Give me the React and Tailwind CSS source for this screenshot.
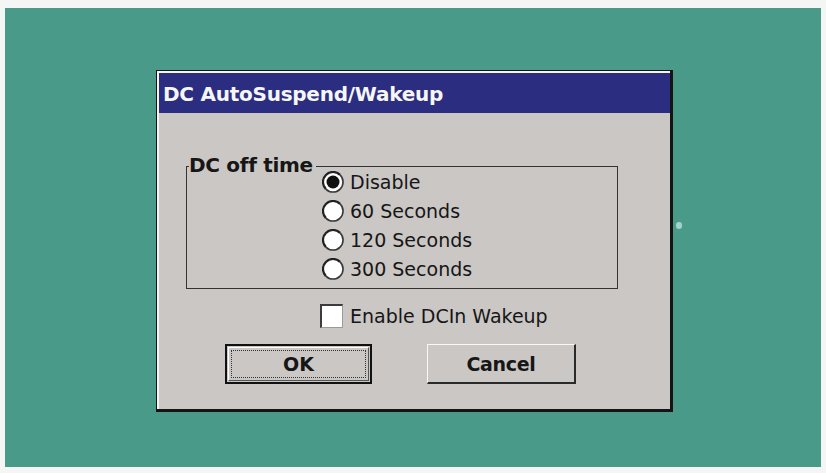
const font = { fontFamily: '"DejaVu Sans", "Liberation Sans", sans-serif' };

function Radio({ checked }) {
  return (
    <svg width="22" height="22" viewBox="0 0 22 22" className="shrink-0">
      <circle cx="11" cy="11" r="10" fill="#ffffff" />
      <path d="M3.9 18.1 A10 10 0 0 1 18.1 3.9" fill="none" stroke="#222222" strokeWidth="2.2" />
      <path d="M18.1 3.9 A10 10 0 0 1 3.9 18.1" fill="none" stroke="#3a3a3a" strokeWidth="1.6" />
      {checked && <circle cx="11" cy="11" r="6.5" fill="#111111" />}
    </svg>
  );
}

export default function App() {
  const options = ["Disable", "60 Seconds", "120 Seconds", "300 Seconds"];
  return (
    <div className="w-[826px] h-[473px] bg-[#f3f6f5] pt-[8px] pl-[5px] overflow-hidden" style={font}>
      <div className="relative w-[816px] h-[459px] bg-[#4a9a8a] pt-[62px] pl-[151px]">
        <div className="w-[517px] h-[342px] border-t border-l border-r-[3px] border-b-[3px] border-[#141414]">
          <div className="h-full border-t-2 border-l-2 border-[#f4f4f4] bg-[#cac7c4] flex flex-col">
            <div className="h-[40px] shrink-0 bg-[#2b2d80] text-[#f6f6f6] font-bold text-[20px] leading-[22px] pl-[4px] pt-[2px] flex items-center tracking-[-0.25px]">
              DC AutoSuspend/Wakeup
            </div>
            <div className="flex-1 flex flex-col text-[#161616]">
              <div className="relative mt-[53px] ml-[27px] w-[432px] h-[123px] border border-[#333333]">
                <span className="absolute left-[2px] top-[-13px] bg-[#cac7c4] pr-[3px] font-bold text-[20px] leading-[22px] tracking-[-0.3px]">
                  DC off time
                </span>
                <div className="flex flex-col pl-[135px]">
                  {options.map((o, i) => (
                    <div key={o} className="h-[29px] flex items-center gap-[6px] text-[19px] leading-[22px]">
                      <Radio checked={i === 0} />
                      <span>{o}</span>
                    </div>
                  ))}
                </div>
              </div>
              <div className="mt-[15px] ml-[161px] h-[24px] flex items-center gap-[7px] text-[19px] leading-[22px]">
                <div className="w-[23px] h-[24px] bg-white border-t-2 border-l-2 border-[#3c3c3c] border-r border-b border-r-[#9a9a9a] border-b-[#9a9a9a]" />
                <span>Enable DCIn Wakeup</span>
              </div>
              <div className="mt-[16px] ml-[66px] flex gap-[55px]">
                <div className="w-[147px] h-[40px] border-2 border-[#111111] p-[1px]">
                  <div className="h-full border-t border-l border-white border-r border-b border-r-[#555555] border-b-[#555555] p-[2px]">
                    <div className="h-full border border-dotted border-[#333333] flex items-center justify-center font-bold text-[19px] leading-[22px]">
                      OK
                    </div>
                  </div>
                </div>
                <div className="w-[149px] h-[40px] border-t border-l border-[#f8f8f8] border-r-2 border-b-2 border-r-[#2a2a2a] border-b-[#2a2a2a] flex items-center justify-center font-bold text-[19px] leading-[22px] tracking-[-0.3px]">
                  Cancel
                </div>
              </div>
            </div>
          </div>
        </div>
        <span className="absolute left-[671px] top-[214px] w-[6px] h-[7px] rounded-full bg-[#9fd3cc]" />
      </div>
    </div>
  );
}
